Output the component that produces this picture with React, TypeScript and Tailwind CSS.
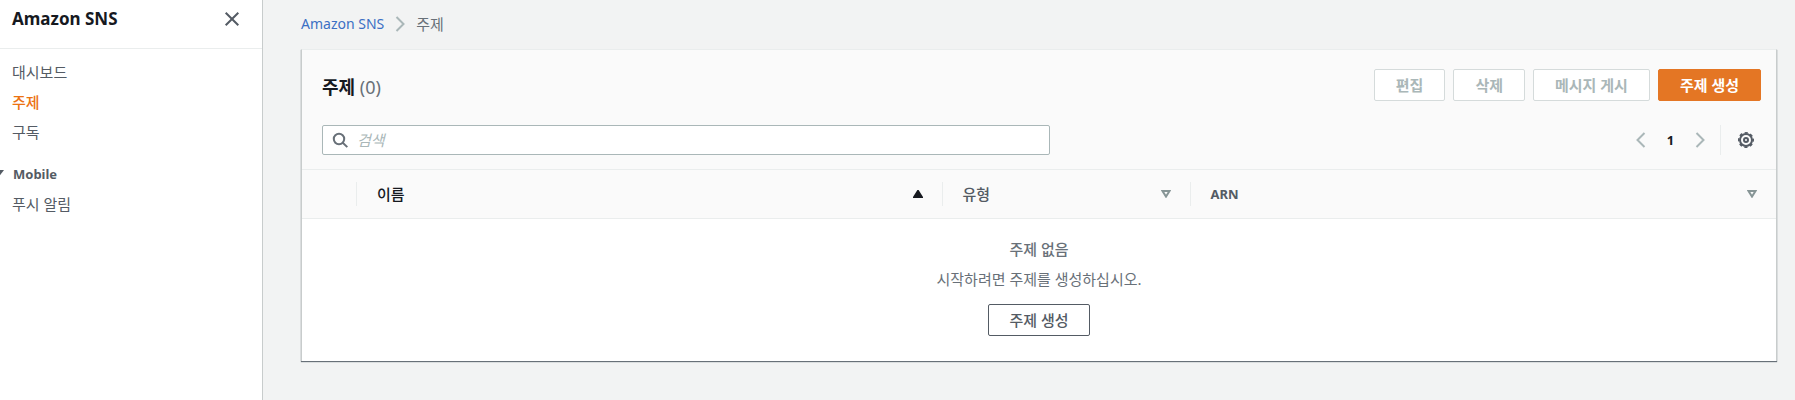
import React from 'react';

/**
 * Icons
 */
const CloseIcon = () => (
  <svg className="w-4 h-4" viewBox="0 0 16 16" fill="none" stroke="currentColor" strokeWidth="2" aria-hidden="true">
    <path d="M1.7 1.7l12.6 12.6M14.3 1.7L1.7 14.3" />
  </svg>
);

const ChevronIcon = ({ flip = false }: { flip?: boolean }) => (
  <svg
    className={flip ? 'w-4 h-4 rotate-180' : 'w-4 h-4'}
    viewBox="0 0 16 16"
    fill="none"
    stroke="currentColor"
    strokeWidth="2"
    aria-hidden="true"
  >
    <path d="M4.5 1l7 7-7 7" />
  </svg>
);

const SearchIcon = () => (
  <svg className="w-4 h-4" viewBox="0 0 16 16" fill="none" stroke="currentColor" strokeWidth="2" aria-hidden="true">
    <circle cx="7" cy="7" r="5.2" />
    <path d="M10.5 10.5l4.8 4.6" />
  </svg>
);

const GearIcon = () => (
  <svg className="w-4 h-4" viewBox="0 0 16 16" fill="none" stroke="currentColor" strokeWidth="2" aria-hidden="true">
    <circle cx="8" cy="8" r="6" />
    <circle cx="8" cy="8" r="7.2" strokeWidth="1.6" strokeDasharray="3.2 2.455" strokeDashoffset="1.6" />
    <circle cx="8" cy="8" r="2" />
  </svg>
);

const SortIcon = ({ active = false }: { active?: boolean }) =>
  active ? (
    <svg className="w-[10px] h-2" viewBox="0 0 10 8" fill="currentColor" aria-hidden="true">
      <path d="M4.4 0h1.2L10 7v1H0V7z" />
    </svg>
  ) : (
    <svg className="w-[10px] h-2 text-[#879596]" viewBox="0 0 10 8" fill="none" stroke="currentColor" strokeWidth="2" aria-hidden="true">
      <path d="M1.5 1h7L5 6.6z" />
    </svg>
  );

interface NavItemProps {
  label: string;
  active?: boolean;
}

const NavItem: React.FC<NavItemProps> = ({ label, active }) => (
  <li>
    <a
      href="#"
      className={active ? 'block text-[15px] leading-[30px] font-medium text-[#ec7211]' : 'block text-[15px] leading-[30px] text-[#545b64]'}
    >
      {label}
    </a>
  </li>
);

const Sidebar = () => (
  <aside className="w-[263px] shrink-0 bg-white border-r border-[#c8cccc]">
    <div className="flex items-center justify-between h-[49px] pl-3 pr-[22px] pb-[11px] border-b border-[#eaeded]">
      <h2 className="text-[17px] leading-6 font-bold text-[#16191f]">Amazon SNS</h2>
      <button type="button" aria-label="닫기" className="text-[#545b64]">
        <CloseIcon />
      </button>
    </div>
    <nav className="pt-2 pl-3">
      <ul>
        <NavItem label="대시보드" />
        <NavItem label="주제" active />
        <NavItem label="구독" />
      </ul>
      <button type="button" className="flex items-center mt-3 -ml-5 gap-[9px] text-[13px] leading-[30px] font-bold text-[#545b64]">
        <svg className="w-3 h-2" viewBox="0 0 12 8" fill="currentColor" aria-hidden="true">
          <path d="M0 0h12L6 8z" />
        </svg>
        Mobile
      </button>
      <ul>
        <NavItem label="푸시 알림" />
      </ul>
    </nav>
  </aside>
);

interface ActionButtonProps {
  label: string;
  variant: 'normal' | 'primary' | 'disabled';
}

const variants = {
  normal: 'px-5 font-medium bg-white border-[#545b64] text-[#545b64]',
  primary: 'px-[21px] font-bold bg-[#e47624] border-[#e47624] text-white',
  disabled: 'px-[21px] font-bold bg-white border-[#d5dbdb] text-[#aab7b8]',
};

const ActionButton: React.FC<ActionButtonProps> = ({ label, variant }) => (
  <button
    type="button"
    disabled={variant === 'disabled'}
    className={`h-8 border rounded-xs text-[15px] leading-5 ${variants[variant]}`}
  >
    {label}
  </button>
);

interface ColumnProps {
  label: string;
  sorted?: boolean;
}

const Column: React.FC<ColumnProps> = ({ label, sorted }) => (
  <th scope="col" aria-sort={sorted ? 'ascending' : undefined} className="p-0 font-medium">
    <div
      className={`flex items-center justify-between h-6 pl-5 pr-[19px] border-r border-[#eaeded] ${sorted ? 'text-[#16191f]' : 'text-[#545b64]'}`}
    >
      {label}
      <SortIcon active={sorted} />
    </div>
  </th>
);

const TopicsPanel = () => (
  <section className="bg-white border-x border-t border-x-[#c8cccc] border-t-[#eaeded] shadow-[0_1px_1px_0_#687078]">
    <header className="bg-[#fafafa] pt-[19px] pb-[14px] pl-5 pr-[15px] border-b border-[#eaeded]">
      <div className="flex items-start justify-between">
        <h1 className="pt-[3px] text-lg leading-[30px] font-bold text-[#16191f]">
          주제 <span className="font-normal text-[#687078]">(0)</span>
        </h1>
        <div className="flex gap-2">
          <ActionButton label="편집" variant="disabled" />
          <ActionButton label="삭제" variant="disabled" />
          <ActionButton label="메시지 게시" variant="disabled" />
          <ActionButton label="주제 생성" variant="primary" />
        </div>
      </div>
      <div className="flex items-center justify-between mt-[23px]">
        <label className="flex items-center grow max-w-[728px] h-[30px] gap-[9px] px-[9px] bg-white border border-[#aab7b8] rounded-xs text-[#687078]">
          <SearchIcon />
          <input
            type="text"
            aria-label="검색"
            placeholder="검색"
            className="grow min-w-0 text-[15px] leading-5 outline-none text-[#16191f] placeholder:italic placeholder:text-[#aab7b8]"
          />
        </label>
        <div className="flex items-center text-[#aab7b8]">
          <button type="button" disabled aria-label="이전 페이지">
            <ChevronIcon flip />
          </button>
          <button type="button" className="w-[43px] text-center text-[13px] leading-5 font-bold text-[#16191f]">
            1
          </button>
          <button type="button" disabled aria-label="다음 페이지">
            <ChevronIcon />
          </button>
          <div className="flex items-center h-[30px] ml-3 pl-[17px] pr-[7px] border-l border-[#eaeded]">
            <button type="button" aria-label="기본 설정" className="text-[#545b64]">
              <GearIcon />
            </button>
          </div>
        </div>
      </div>
    </header>

    <table className="w-full table-fixed">
      <colgroup>
        <col className="w-[55px]" />
        <col />
        <col className="w-[248px]" />
        <col />
      </colgroup>
      <thead className="bg-[#fafafa] text-left text-[15px] leading-5">
        <tr className="h-12 border-b border-[#eaeded]">
          <td className="p-0">
            <div className="h-6 border-r border-[#eaeded]" />
          </td>
          <Column label="이름" sorted />
          <Column label="유형" />
          <th scope="col" className="p-0 font-bold">
            <div className="flex items-center justify-between h-6 pl-5 pr-[19px] text-[13px] text-[#545b64]">
              ARN
              <SortIcon />
            </div>
          </th>
        </tr>
      </thead>
      <tbody>
        <tr>
          <td colSpan={4} className="pt-[15px] pb-[25px] text-center text-[15px] leading-[30px]">
            <p className="font-medium text-[#687078]">주제 없음</p>
            <p className="mb-[10px] text-[#687078]">시작하려면 주제를 생성하십시오.</p>
            <ActionButton label="주제 생성" variant="normal" />
          </td>
        </tr>
      </tbody>
    </table>
  </section>
);

const App = () => {
  return (
    <div className="flex min-h-screen bg-[#f2f3f3] font-['Noto_Sans','Noto_Sans_CJK_KR',sans-serif]">
      <Sidebar />
      <main className="grow min-w-0 pl-[38px] pr-[18px]">
        <nav aria-label="탐색 경로" className="flex items-center gap-2 h-[49px] pb-0.5">
          <a href="#" className="text-sm text-[#3b6fc4]">
            Amazon SNS
          </a>
          <span className="text-[#aab7b8]">
            <ChevronIcon />
          </span>
          <span className="text-[15px] leading-5 text-[#687078]">주제</span>
        </nav>
        <TopicsPanel />
      </main>
    </div>
  );
};

export default App;
